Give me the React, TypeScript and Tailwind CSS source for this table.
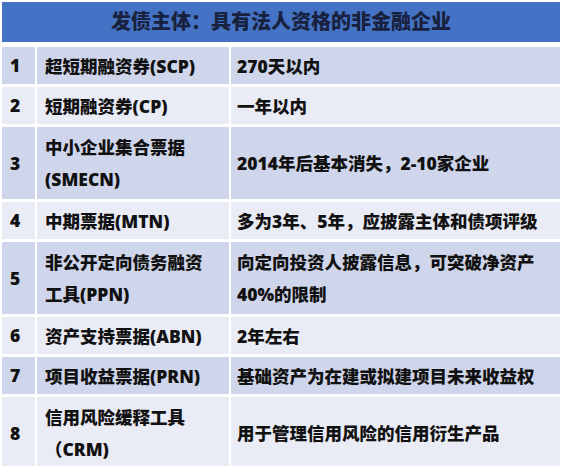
import React from 'react'

type Row = { no: string; name: string[]; desc: string[]; tall?: boolean }

const rows: Row[] = [
  { no: '1', name: ['超短期融资券(SCP)'], desc: ['270天以内'] },
  { no: '2', name: ['短期融资券(CP)'], desc: ['一年以内'] },
  { no: '3', name: ['中小企业集合票据', '(SMECN)'], desc: ['2014年后基本消失，2-10家企业'], tall: true },
  { no: '4', name: ['中期票据(MTN)'], desc: ['多为3年、5年，应披露主体和债项评级'] },
  { no: '5', name: ['非公开定向债务融资', '工具(PPN)'], desc: ['向定向投资人披露信息，可突破净资产', '40%的限制'], tall: true },
  { no: '6', name: ['资产支持票据(ABN)'], desc: ['2年左右'] },
  { no: '7', name: ['项目收益票据(PRN)'], desc: ['基础资产为在建或拟建项目未来收益权'] },
  { no: '8', name: ['信用风险缓释工具', '（CRM)'], desc: ['用于管理信用风险的信用衍生产品'], tall: true },
]

const Lines = ({ lines }: { lines: string[] }) => (
  <div className="leading-[32px]">
    {lines.map((l) => (
      <div key={l} className="whitespace-nowrap">{l}</div>
    ))}
  </div>
)

export default function App() {
  return (
    <div
      className="w-[562px] h-[466px] overflow-hidden bg-white pt-[2px] px-[2px] text-[#111111] font-black"
      style={{ fontFamily: '"Open Sans", "Noto Sans CJK SC", sans-serif' }}
    >
      {/* title bar */}
      <div className="w-[558px] h-[40px] bg-[#4472c4] flex items-center justify-center text-[20px] text-[#18223f] mb-[5px]">
        发债主体：具有法人资格的非金融企业
      </div>

      <div className="flex flex-col gap-[3px] text-[17.5px]">
        {rows.map((r, i) => {
          const bg = i % 2 === 0 ? 'bg-[#cfd5ea]' : 'bg-[#e9ebf5]'
          const h = r.tall ? 'h-[72px]' : 'h-[37px]'
          return (
            <div key={r.no} className={`flex gap-[2px] ${h}`}>
              <div className={`${bg} w-[33px] flex items-center pl-[8px]`}>{r.no}</div>
              <div className={`${bg} w-[192px] flex items-center pl-[8px]`}>
                <Lines lines={r.name} />
              </div>
              <div className={`${bg} w-[329px] flex items-center pl-[6px]`}>
                <Lines lines={r.desc} />
              </div>
            </div>
          )
        })}
      </div>
    </div>
  )
}
